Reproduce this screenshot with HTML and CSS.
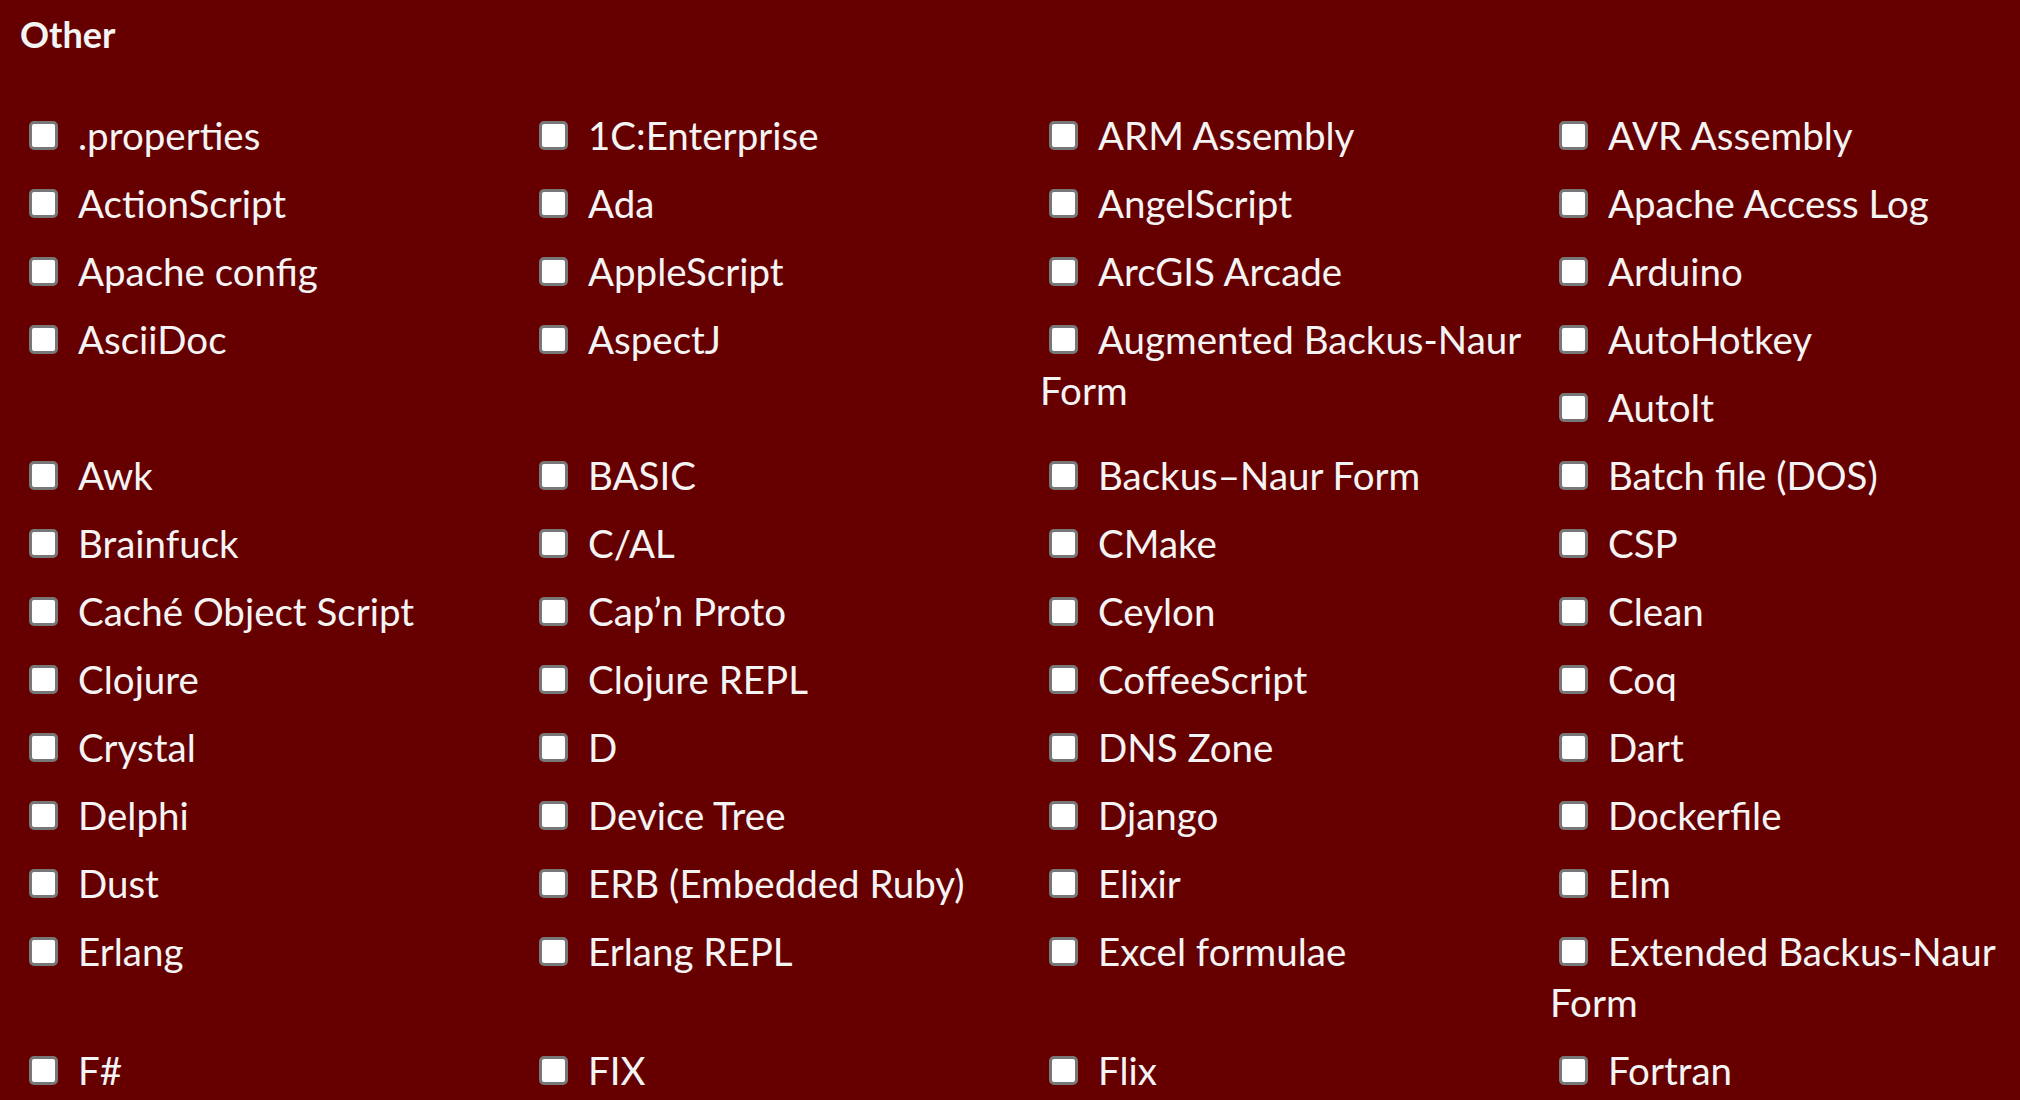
FILE: index.html
```html
<!DOCTYPE html>
<html>
<head>
<meta charset="utf-8">
<link rel="stylesheet" href="styles.css">
</head>
<body>
<div class="page">
  <h2 class="title">Other</h2>
  <div class="list">
    <label class="item"><span class="cb"></span>.properties</label>
    <label class="item"><span class="cb"></span>1C:Enterprise</label>
    <label class="item"><span class="cb"></span>ARM Assembly</label>
    <label class="item"><span class="cb"></span>AVR Assembly</label>
    <label class="item"><span class="cb"></span>ActionScript</label>
    <label class="item"><span class="cb"></span>Ada</label>
    <label class="item"><span class="cb"></span>AngelScript</label>
    <label class="item"><span class="cb"></span>Apache Access Log</label>
    <label class="item"><span class="cb"></span>Apache config</label>
    <label class="item"><span class="cb"></span>AppleScript</label>
    <label class="item"><span class="cb"></span>ArcGIS Arcade</label>
    <label class="item"><span class="cb"></span>Arduino</label>
    <label class="item"><span class="cb"></span>AsciiDoc</label>
    <label class="item"><span class="cb"></span>AspectJ</label>
    <label class="item"><span class="cb"></span>Augmented Backus-Naur Form</label>
    <label class="item"><span class="cb"></span>AutoHotkey</label>
    <label class="item"><span class="cb"></span>AutoIt</label>
    <label class="item"><span class="cb"></span>Awk</label>
    <label class="item"><span class="cb"></span>BASIC</label>
    <label class="item"><span class="cb"></span>Backus–Naur Form</label>
    <label class="item"><span class="cb"></span>Batch file (DOS)</label>
    <label class="item"><span class="cb"></span>Brainfuck</label>
    <label class="item"><span class="cb"></span>C/AL</label>
    <label class="item"><span class="cb"></span>CMake</label>
    <label class="item"><span class="cb"></span>CSP</label>
    <label class="item"><span class="cb"></span>Caché Object Script</label>
    <label class="item"><span class="cb"></span>Cap’n Proto</label>
    <label class="item"><span class="cb"></span>Ceylon</label>
    <label class="item"><span class="cb"></span>Clean</label>
    <label class="item"><span class="cb"></span>Clojure</label>
    <label class="item"><span class="cb"></span>Clojure REPL</label>
    <label class="item"><span class="cb"></span>CoffeeScript</label>
    <label class="item"><span class="cb"></span>Coq</label>
    <label class="item"><span class="cb"></span>Crystal</label>
    <label class="item"><span class="cb"></span>D</label>
    <label class="item"><span class="cb"></span>DNS Zone</label>
    <label class="item"><span class="cb"></span>Dart</label>
    <label class="item"><span class="cb"></span>Delphi</label>
    <label class="item"><span class="cb"></span>Device Tree</label>
    <label class="item"><span class="cb"></span>Django</label>
    <label class="item"><span class="cb"></span>Dockerfile</label>
    <label class="item"><span class="cb"></span>Dust</label>
    <label class="item"><span class="cb"></span>ERB (Embedded Ruby)</label>
    <label class="item"><span class="cb"></span>Elixir</label>
    <label class="item"><span class="cb"></span>Elm</label>
    <label class="item"><span class="cb"></span>Erlang</label>
    <label class="item"><span class="cb"></span>Erlang REPL</label>
    <label class="item"><span class="cb"></span>Excel formulae</label>
    <label class="item"><span class="cb"></span>Extended Backus-Naur Form</label>
    <label class="item"><span class="cb"></span>F#</label>
    <label class="item"><span class="cb"></span>FIX</label>
    <label class="item"><span class="cb"></span>Flix</label>
    <label class="item"><span class="cb"></span>Fortran</label>
  </div>
</div>
</body>
</html>
```

FILE: styles.css
```css
html, body {
  margin: 0;
  padding: 0;
  background: #660000;
  overflow: hidden;
  height: 1100px;
}
.page {
  padding: 12px 20px 0;
  font-family: Lato, "Liberation Sans", sans-serif;
  color: #f4f4f4;
}
.title {
  margin: 0 0 53.5px;
  font-size: 36px;
  line-height: 44px;
  font-weight: 700;
}
.list {
  width: 2040px;
}
.item {
  float: left;
  box-sizing: border-box;
  width: 510px;
  padding-bottom: 16.5px;
  font-size: 38.5px;
  line-height: 51.5px;
}
.cb {
  display: inline-block;
  box-sizing: border-box;
  width: 29px;
  height: 29px;
  margin: 0 20px 0 9px;
  background: #fff;
  border: 3px solid #777;
  border-radius: 5px;
  vertical-align: baseline;
}
```
